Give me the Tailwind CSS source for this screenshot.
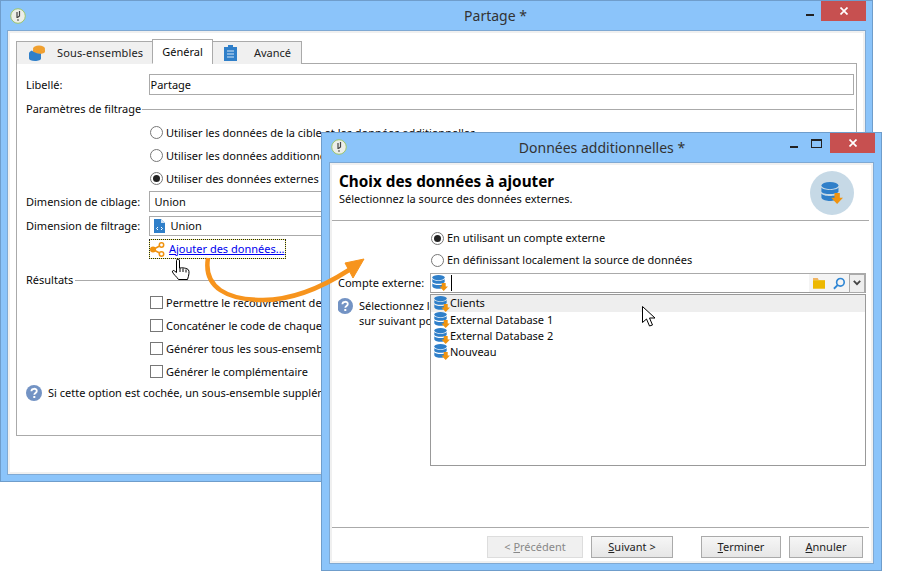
<!doctype html>
<html lang="fr"><head><meta charset="utf-8"><script src="https://cdn.jsdelivr.net/npm/@tailwindcss/browser@4"></script></head>
<body class="bg-white">
<svg width="0" height="0" class="absolute">
  <defs>
    <symbol id="db" viewBox="0 0 16 16">
      <ellipse cx="6.500" cy="2.600" rx="6.200" ry="2.600" fill="#2f7fc9"/>
      <path d="M.3 4c1 2.400 11.400 2.400 12.400 0v3c-1 2.400-11.400 2.400-12.400 0z" fill="#2f7fc9"/>
      <path d="M.3 8.300c1 2.400 11.400 2.400 12.400 0v3c-.6 2-4 2.500-6.200 2.500s-5.600-.5-6.200-2.500z" fill="#2f7fc9"/>
      <path d="M9.800 8h3.900v3.500H16L11.700 16l-4.300-4.500h2.400z" fill="#f0930f"/>
    </symbol>
    <symbol id="help" viewBox="0 0 16 16">
      <circle cx="8" cy="8" r="8" fill="#7393c4"/>
      <path d="M5.400 6.200c0-3.200 5.400-3.200 5.400-.2 0 2-2.500 2-2.500 3.800" fill="none" stroke="#fff" stroke-width="1.800"/>
      <rect x="7.300" y="11" width="2" height="2" fill="#fff"/>
    </symbol>
    <symbol id="logo" viewBox="0 0 16 16">
      <circle cx="8" cy="8" r="7.300" fill="#eceee8" stroke="#9cc56c"/>
      <path d="M7 4v6M9.500 3v5l-2 1.500M7 12h2" fill="none" stroke="#444" stroke-width="1.200"/>
    </symbol>
  </defs>
</svg>

<div class="relative w-[909px] h-[584px] overflow-hidden font-['Noto_Sans',sans-serif] text-[11px] leading-[16px] text-[#0a0a0a] whitespace-nowrap">

  <!-- Main window -->
  <section class="absolute left-0 top-0 w-[873px] h-[482px] bg-[#8bc4fa] border border-[#6f9dcb] flex flex-col">
    <header class="relative h-[30px] shrink-0 flex items-center justify-center text-[14px] text-[#333]">
      <svg class="absolute left-[9px] top-[7px] w-[16px] h-[16px]"><use href="#logo"/></svg>
      <span class="pl-[118px] pb-[1px]">Partage *</span>
      <div class="absolute right-[58px] top-[13px] w-[8px] h-[2px] bg-[#222]"></div>
      <div class="absolute right-[33px] top-[6px] w-[11px] h-[9px] border border-[#222] border-t-2"></div>
      <div class="absolute right-[6px] top-0 w-[45px] h-[20px] bg-[#c75050] flex items-center justify-center">
        <svg class="w-[8px] h-[8px]" viewBox="0 0 8 8"><path d="M.5.500l7 7M7.500.500l-7 7" stroke="#fff" stroke-width="1.700"/></svg>
      </div>
    </header>
    <div class="mx-[7px] mb-[7px] flex-1 bg-white border-[2px] border-[#f0f0f0] outline outline-[#7fa9d3] px-[6px] pt-[6px] pb-[36px] flex flex-col">
      <!-- Tabs -->
      <div class="flex items-end h-[25px] shrink-0 relative z-10 -mb-[1px]">
        <div class="w-[137px] h-[23px] bg-[#f0f0f0] border border-[#aaa] border-b-0 flex items-center">
          <svg class="w-[18px] h-[18px] ml-[11px]" viewBox="0 0 18 18"><ellipse cx="11" cy="4.500" rx="6" ry="3" fill="#f0a030"/><path d="M5 4.500v3c0 1.500 2.500 2.500 6 2.500s6-1 6-2.500v-3c-1 3-11 3-12 0z" fill="#f0a030"/><path d="M1 9.500c0-1.500 1.500-2.500 3-3 1 2 9 4 9 3v5c0 1.500-2.500 2.500-6 2.500s-6-1-6-2.500z" fill="#2f7fc9"/></svg>
          <span class="ml-[11px] text-[#222] tracking-[0.15px]">Sous-ensembles</span>
        </div>
        <div class="w-[61px] h-[25px] bg-white border border-[#aaa] border-b-white flex items-center justify-center -ml-[1px]">Général</div>
        <div class="w-[90px] h-[23px] bg-[#f0f0f0] border border-[#aaa] border-b-0 -ml-[1px] flex items-center">
          <svg class="w-[14px] h-[16px] ml-[11px]" viewBox="0 0 14 16"><path d="M0 2h4V0h5v2h4v14H0z" fill="#2f7fc9"/><path d="M3 6h7M3 9h7M3 12h7" stroke="#d4e6f6"/></svg>
          <span class="ml-[16px] text-[#222]">Avancé</span>
        </div>
      </div>
      <!-- Panel -->
      <div class="flex-1 border border-[#aaa] bg-white pl-[9px] pr-[2px] pt-[10px] flex flex-col relative">
        <div class="flex items-center h-[21px]">
          <span class="w-[123px]">Libellé:</span>
          <div class="w-[708px] h-[21px] border border-[#aaa] flex items-center pl-[1px]">Partage</div>
        </div>
        <div class="flex items-center h-[16px] mt-[6px]">
          <span>Paramètres de filtrage</span><div class="flex-1 h-px bg-[#aaa] ml-[1px]"></div>
        </div>
        <div class="pl-[123px] mt-[4px] flex flex-col">
          <label class="flex items-center h-[23px]"><i class="w-[13px] h-[13px] rounded-full border border-[#777] mr-[3px] ml-px shrink-0"></i>Utiliser les données de la cible et les données additionnelles</label>
          <label class="flex items-center h-[23px]"><i class="w-[13px] h-[13px] rounded-full border border-[#777] mr-[3px] ml-px shrink-0"></i>Utiliser les données additionnelles uniquement</label>
          <label class="flex items-center h-[23px]"><i class="w-[13px] h-[13px] rounded-full border border-[#777] mr-[3px] ml-px shrink-0 flex items-center justify-center"><b class="block w-[7px] h-[7px] rounded-full bg-[#222]"></b></i>Utiliser des données externes</label>
        </div>
        <div class="flex items-center h-[21px] mt-[1px]">
          <span class="w-[123px]">Dimension de ciblage:</span>
          <div class="w-[708px] h-[21px] border border-[#aaa] flex items-center pl-[5px]">Union</div>
        </div>
        <div class="flex items-center h-[20px] mt-[4px]">
          <span class="w-[123px]">Dimension de filtrage:</span>
          <div class="w-[708px] h-[20px] border border-[#aaa] flex items-center pl-[4px]">
            <svg class="w-[11px] h-[14px] mr-[6px]" viewBox="0 0 11 14"><path d="M0 0h7l4 4v10H0z" fill="#2f7fc9"/><path d="M7 0v4h4z" fill="#cfe2f4"/><path d="M4 8L2.500 9.500 4 11M7 8l1.500 1.500L7 11" stroke="#fff" fill="none"/></svg>Union
          </div>
        </div>
        <div class="pl-[123px] mt-[3px]">
          <div class="w-[137px] h-[20px] bg-[#f5f27a]">
            <a class="flex items-center w-[137px] h-[20px] border border-dotted border-[#222] bg-white bg-clip-padding text-[#0000ee] underline">
              <svg class="w-[15px] h-[15px] mr-[4px] shrink-0" viewBox="0 0 15 15"><path d="M3 7.500L11.500 3M3 7.500l8.500 4.500" stroke="#f0930f" stroke-width="1.500"/><circle cx="3" cy="7.500" r="3" fill="#f0930f"/><circle cx="11.500" cy="3" r="2.200" fill="#fff" stroke="#f0930f" stroke-width="1.500"/><circle cx="11.500" cy="12" r="2.200" fill="#fff" stroke="#f0930f" stroke-width="1.500"/></svg>Ajouter des données...
            </a>
          </div>
        </div>
        <div class="flex items-center h-[16px] mt-[13px]">
          <span>Résultats</span><div class="flex-1 h-px bg-[#aaa] ml-[2px]"></div>
        </div>
        <div class="pl-[123px] mt-[3px] flex flex-col">
          <label class="flex items-center h-[23px]"><i class="w-[13px] h-[13px] border border-[#777] mr-[3px] ml-px shrink-0"></i>Permettre le recouvrement des sous-ensembles</label>
          <label class="flex items-center h-[23px]"><i class="w-[13px] h-[13px] border border-[#777] mr-[3px] ml-px shrink-0"></i>Concaténer le code de chaque sous-ensemble</label>
          <label class="flex items-center h-[23px]"><i class="w-[13px] h-[13px] border border-[#777] mr-[3px] ml-px shrink-0"></i>Générer tous les sous-ensembles</label>
          <label class="flex items-center h-[23px]"><i class="w-[13px] h-[13px] border border-[#777] mr-[3px] ml-px shrink-0"></i>Générer le complémentaire</label>
        </div>
        <div class="flex items-center h-[16px] mt-[2px]">
          <svg class="w-[16px] h-[16px] mr-[6px]"><use href="#help"/></svg>Si cette option est cochée, un sous-ensemble supplémentaire est créé
        </div>
      </div>
    </div>
  </section>

  <!-- Dialog -->
  <section class="absolute left-[321px] top-[132px] w-[561px] h-[439px] bg-[#8bc4fa] border border-[#6f9dcb] flex flex-col z-20">
    <header class="relative h-[30px] shrink-0 flex items-center justify-center text-[14px] text-[#333]">
      <svg class="absolute left-[9px] top-[6px] w-[16px] h-[16px]"><use href="#logo"/></svg>
      <span class="pb-[1px] pl-[1px]">Données additionnelles *</span>
      <div class="absolute right-[83px] top-[13px] w-[8px] h-[2px] bg-[#222]"></div>
      <div class="absolute right-[59px] top-[6px] w-[11px] h-[9px] border border-[#222] border-t-2"></div>
      <div class="absolute right-[6px] top-0 w-[45px] h-[20px] bg-[#c75050] flex items-center justify-center">
        <svg class="w-[8px] h-[8px]" viewBox="0 0 8 8"><path d="M.5.500l7 7M7.500.500l-7 7" stroke="#fff" stroke-width="1.700"/></svg>
      </div>
    </header>
    <div class="mx-[8px] mb-[7px] flex-1 bg-white border-[2px] border-[#f0f0f0] outline outline-[#7fa9d3] flex flex-col min-h-0">
      <div class="relative h-[56px] shrink-0 border-b border-[#aaa] mr-[2px] pl-[7px] pt-[6px]">
        <h1 class="font-bold text-[15.300px] leading-[20px] text-black">Choix des données à ajouter</h1>
        <p class="leading-[16px]">Sélectionnez la source des données externes.</p>
        <div class="absolute right-[15px] top-[6px] w-[44px] h-[44px] rounded-full bg-[#c6d9e6] flex items-center justify-center">
          <svg class="w-[22px] h-[22px]"><use href="#db"/></svg>
        </div>
      </div>
      <div class="flex-1 relative pl-[6px] pt-[6px] min-h-0">
        <div class="pl-[93px] flex flex-col">
          <label class="flex items-center h-[22px]"><i class="w-[13px] h-[13px] rounded-full border border-[#777] mr-[3px] shrink-0 flex items-center justify-center"><b class="block w-[7px] h-[7px] rounded-full bg-[#222]"></b></i>En utilisant un compte externe</label>
          <label class="flex items-center h-[22px]"><i class="w-[13px] h-[13px] rounded-full border border-[#777] mr-[3px] shrink-0"></i>En définissant localement la source de données</label>
        </div>
        <div class="flex mt-[2px] items-center h-[20px]">
          <span class="w-[92px] shrink-0">Compte externe:</span>
          <div class="w-[436px] h-[20px] border border-[#aaa] border-b-[#999] flex items-center pl-[1px] relative">
            <svg class="w-[16px] h-[16px] shrink-0"><use href="#db"/></svg>
            <i class="block w-px h-[16px] bg-black ml-[3px]"></i>
            <div class="absolute right-0 top-0 h-[18px] w-[56px] bg-[#f4f4f4] flex items-center pl-[4px]">
              <svg class="w-[13px] h-[11px]" viewBox="0 0 13 11"><path d="M0 0h5l1 1.500H0z" fill="#f0a030"/><path d="M0 2h13v9H0z" fill="#edb800"/></svg>
              <svg class="w-[13px] h-[13px] ml-[8px]" viewBox="0 0 13 13"><circle cx="7.800" cy="5.200" r="4" fill="none" stroke="#2f86d4" stroke-width="1.700"/><path d="M4.800 8.200L1 12" stroke="#2f86d4" stroke-width="2"/></svg>
              <div class="ml-[3px] w-[17px] h-[19px] bg-[#eee] border border-[#aaa] flex items-center justify-center">
                <svg class="w-[8px] h-[6px]" viewBox="0 0 8 6"><path d="M.8.800L4 4.200 7.200.800" fill="none" stroke="#444" stroke-width="1.800"/></svg>
              </div>
            </div>
          </div>
        </div>
        <div class="flex mt-[1px]">
          <div class="w-[92px] shrink-0 flex pt-[4px] overflow-hidden">
            <svg class="w-[16px] h-[16px] mr-[6px] -ml-px shrink-0"><use href="#help"/></svg>
            <p class="leading-[15px]">Sélectionnez le compte externe,<br>sur suivant pour continuer</p>
          </div>
          <ul class="w-[436px] h-[172px] border border-[#999] bg-white shrink-0">
            <li class="flex items-center h-[17px] bg-[#eee] pl-[3px]"><svg class="w-[16px] h-[16px]"><use href="#db"/></svg><span class="-mt-[1px]">Clients</span></li>
            <li class="flex items-center h-[16px] pl-[3px]"><svg class="w-[16px] h-[16px]"><use href="#db"/></svg>External Database 1</li>
            <li class="flex items-center h-[16px] pl-[3px]"><svg class="w-[16px] h-[16px]"><use href="#db"/></svg>External Database 2</li>
            <li class="flex items-center h-[16px] pl-[3px]"><svg class="w-[16px] h-[16px]"><use href="#db"/></svg>Nouveau</li>
          </ul>
        </div>
      </div>
      <footer class="h-[34px] shrink-0 border-t border-[#aaa] mr-[2px] flex items-start pt-[8px] text-[#222]">
        <button class="ml-[155px] w-[96px] h-[22px] border border-[#ddd] bg-[#f0f0f0] text-[#888]">&lt; <u>P</u>récédent</button>
        <button class="ml-[8px] w-[82px] h-[22px] border border-[#aaa] bg-gradient-to-b from-[#f6f6f6] to-[#e6e6e6]"><u>S</u>uivant &gt;</button>
        <button class="ml-[28px] w-[80px] h-[22px] border border-[#aaa] bg-gradient-to-b from-[#f6f6f6] to-[#e6e6e6]"><u>T</u>erminer</button>
        <button class="ml-[8px] w-[74px] h-[22px] border border-[#aaa] bg-gradient-to-b from-[#f6f6f6] to-[#e6e6e6]"><u>A</u>nnuler</button>
      </footer>
    </div>
  </section>

  <!-- Overlays: arrow and pointers -->
  <svg class="absolute left-0 top-0 w-[909px] h-[584px] z-30 pointer-events-none" viewBox="0 0 909 584">
    <path d="M208 258c-5 30 20 42 55 42 30 0 58-12 86-30" fill="none" stroke="#f7941d" stroke-width="4.500"/>
    <path d="M364 259l-19 4 8 15z" fill="#f7941d" stroke="#f7941d"/>
    <path d="M177 259.500c1.500-1 2.500 0 2.500 1.500v7c2-.5 8 0 9 2 1 1.500 .5 5-1 9.500h-9c-2-3-5-5-6-7.500-.5-1.500 1-2 2-1l2 1.500v-12c0-1 .5-1 .5-1z" fill="#fff" stroke="#000"/>
    <path d="M180 268v4M183 268.500v3.500M186 269.500v3" stroke="#000"/>
    <path d="M642.500 306.500v16l4-3.500 3 7 3-1-3-7h5.500z" fill="#fff" stroke="#000"/>
  </svg>
</div>
</body></html>
